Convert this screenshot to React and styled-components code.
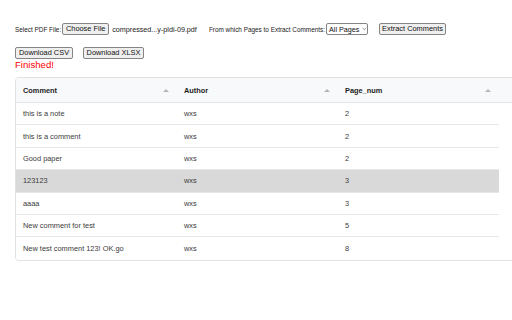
import React from "react";
import styled, { createGlobalStyle } from "styled-components";

const Global = createGlobalStyle`
  html, body { margin: 0; padding: 0; overflow: hidden; background: #fff; }
  body { font-family: "Liberation Sans", Arial, sans-serif; }
`;

const Page = styled.div`
  padding: 23px 0 0 15px;
  width: 560px;
`;

const TopBar = styled.div`
  display: flex;
  align-items: center;
  height: 12px;
`;

const Label = styled.span`
  font-size: 6.4px;
  color: #222;
  white-space: nowrap;
  margin-left: ${(p) => p.$ml || 0}px;
  margin-right: 1px;
`;

const FileName = styled.span`
  font-size: 7.2px;
  color: #222;
  white-space: nowrap;
  margin-left: 3px;
`;

const Btn = styled.button`
  font-family: "Liberation Sans", Arial, sans-serif;
  font-size: 7.4px;
  height: 12px;
  padding: 0;
  margin: 0 0 0 ${(p) => p.$ml || 0}px;
  background: #efefef;
  border: 1px solid #858585;
  border-radius: 2px;
  color: #111;
  line-height: 10px;
  white-space: nowrap;
  display: inline-flex;
  align-items: center;
  justify-content: center;
  box-sizing: border-box;
  width: ${(p) => p.$w}px;
  flex: none;
`;

const Select = styled.div`
  font-size: 7.2px;
  height: 12px;
  width: 42px;
  flex: none;
  white-space: nowrap;
  box-sizing: border-box;
  border: 1px solid #858585;
  border-radius: 2px;
  display: flex;
  align-items: center;
  padding-left: 2px;
  gap: 3px;
  color: #111;
`;

const BtnRow = styled.div`
  display: flex;
  align-items: center;
  margin-top: 12px;
  height: 12px;
`;

const Status = styled.div`
  color: #ff0000;
  font-size: 9.6px;
  margin-top: 1px;
  line-height: 10px;
`;

const Table = styled.div`
  margin-top: 7px;
  width: 520px;
  border: 1px solid #e2e2e2;
  border-radius: 4px;
  overflow: hidden;
  font-size: 7.4px;
  color: #3a3a3a;
`;

const HeadRow = styled.div`
  display: flex;
  height: 24px;
  background: #f8f9fa;
  border-bottom: 1px solid #e4e4e4;
  align-items: center;
`;

const HeadCell = styled.div`
  width: 161px;
  box-sizing: border-box;
  padding: 0 8px 0 7px;
  display: flex;
  align-items: center;
  justify-content: space-between;
  font-weight: 700;
  color: #1e1e1e;
`;

const Arrow = styled.span`
  width: 0;
  height: 0;
  border-left: 3px solid transparent;
  border-right: 3px solid transparent;
  border-bottom: 3px solid #b5b5b5;
`;

const Row = styled.div`
  display: flex;
  width: 483px;
  height: 22.4px;
  box-sizing: border-box;
  align-items: center;
  background: ${(p) => (p.$hl ? "#d9d9d9" : "#fff")};
  border-bottom: ${(p) => (p.$last ? "none" : "1px solid #e6e6e6")};
`;

const Cell = styled.div`
  width: 161px;
  box-sizing: border-box;
  padding-left: 7px;
`;

const data = [
  ["this is a note", "wxs", "2"],
  ["this is a comment", "wxs", "2"],
  ["Good paper", "wxs", "2"],
  ["123123", "wxs", "3"],
  ["aaaa", "wxs", "3"],
  ["New comment for test", "wxs", "5"],
  ["New test comment 123! OK.go", "wxs", "8"],
];

export default function App() {
  return (
    <>
      <Global />
      <Page>
        <TopBar>
          <Label>Select PDF File:</Label>
          <Btn $w={47}>Choose File</Btn>
          <FileName>compressed...y-pldi-09.pdf</FileName>
          <Label $ml={12}>From which Pages to Extract Comments:</Label>
          <Select>
            All Pages
            <svg width="6" height="4" viewBox="0 0 6 4">
              <path d="M0.5 0.5 L3 3 L5.5 0.5" fill="none" stroke="#555" strokeWidth="0.8" />
            </svg>
          </Select>
          <Btn $ml={11} $w={67}>Extract Comments</Btn>
        </TopBar>
        <BtnRow>
          <Btn $w={58}>Download CSV</Btn>
          <Btn $ml={10} $w={61}>Download XLSX</Btn>
        </BtnRow>
        <Status>Finished!</Status>
        <Table>
          <HeadRow>
            <HeadCell>Comment<Arrow /></HeadCell>
            <HeadCell>Author<Arrow /></HeadCell>
            <HeadCell>Page_num<Arrow /></HeadCell>
          </HeadRow>
          {data.map((r, i) => (
            <Row key={i} $hl={i === 3} $last={i === data.length - 1}>
              <Cell>{r[0]}</Cell>
              <Cell>{r[1]}</Cell>
              <Cell>{r[2]}</Cell>
            </Row>
          ))}
        </Table>
      </Page>
    </>
  );
}
